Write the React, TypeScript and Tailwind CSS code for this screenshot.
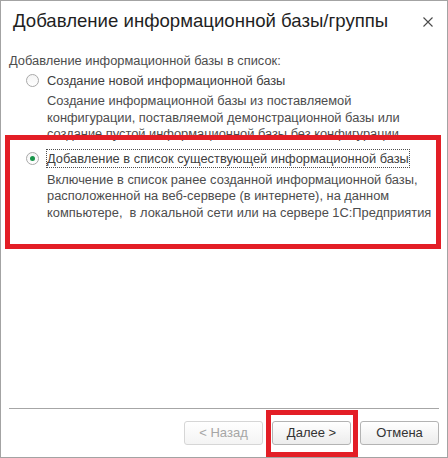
import React from "react";

function Radio({ checked }: { checked?: boolean }) {
    return (
        <span className="flex h-[13px] w-[13px] shrink-0 items-center justify-center rounded-full border border-[#a9a9a9] bg-gradient-to-b from-[#f4f4f4] to-white">
            {checked && (
                <span className="block h-[5px] w-[5px] rounded-full bg-[#19954a]" />
            )}
        </span>
    );
}

function Button({
    label,
    disabled,
}: {
    label: string;
    disabled?: boolean;
}) {
    return (
        <button
            disabled={disabled}
            className={
                disabled
                    ? "h-6 w-[79px] rounded-[3px] border border-[#d6d6d6] bg-gradient-to-b from-white to-[#f4f4f4] text-[13px] text-[#a6a6a6]"
                    : "h-6 w-[79px] rounded-[3px] border border-[#b3b3b3] bg-gradient-to-b from-white to-[#ececec] text-[13px] text-[#333333]"
            }
        >
            {label}
        </button>
    );
}

export default function App() {
    return (
        <div className="relative flex h-[458px] w-[448px] flex-col border border-[#a3a3a3] bg-white font-['Liberation_Sans',Arial,sans-serif]">
            <div className="flex items-center justify-between pl-3 pr-[14px] pt-2">
                <h1 className="text-[18.6px] leading-6 text-[#1f1f1f]">
                    Добавление информационной базы/группы
                </h1>
                <svg width="10" height="10" viewBox="0 0 10 10" className="mt-[2px]">
                    <path
                        d="M0.5 0.5L9.5 9.5M9.5 0.5L0.5 9.5"
                        stroke="#4a4a4a"
                        strokeWidth="1.1"
                    />
                </svg>
            </div>

            <p className="mt-[19px] pl-2 text-[12.85px] leading-[17px] text-[#4d4d4d]">
                Добавление информационной базы в список:
            </p>

            <div className="mt-[3px] pl-[25px] text-[12.85px]">
                <div className="flex items-center gap-2 leading-[17px] text-[#404040]">
                    <Radio />
                    <span>Создание новой информационной базы</span>
                </div>
                <p className="mt-1 whitespace-nowrap pl-[21px] leading-[16.5px] text-[#4d4d4d]">
                    Создание информационной базы из поставляемой
                    <br />
                    конфигурации, поставляемой демонстрационной базы или
                    <br />
                    создание пустой информационной базы без конфигурации
                </p>

                <div className="mt-[7px] flex items-center gap-2 leading-[17px] text-[#404040]">
                    <Radio checked />
                    <span className="outline-1 outline-dotted outline-[#4d4d4d]">
                        Добавление в список существующей информационной базы
                    </span>
                </div>
                <p className="mt-[5px] whitespace-nowrap pl-[21px] leading-[16.5px] text-[#4d4d4d]">
                    Включение в список ранее созданной информационной базы,
                    <br />
                    расположенной на веб-сервере (в интернете), на данном
                    <br />
                    {"компьютере,\u00a0 в локальной сети или на сервере 1С:Предприятия"}
                </p>
            </div>

            <div className="flex-1" />

            <div className="mx-2 h-px bg-[#a6a6a6]" />

            <div className="flex justify-end gap-[9px] pb-3 pr-2 pt-3">
                <Button label="< Назад" disabled />
                <Button label="Далее >" />
                <Button label="Отмена" />
            </div>

            {/* red annotation frames */}
            <div className="pointer-events-none absolute left-[4px] top-[134px] h-[114px] w-[436px] border-[5px] border-[#e31e26]" />
            <div className="pointer-events-none absolute left-[265px] top-[409px] h-[47px] w-[92px] border-[5px] border-[#e31e26]" />
        </div>
    );
}
